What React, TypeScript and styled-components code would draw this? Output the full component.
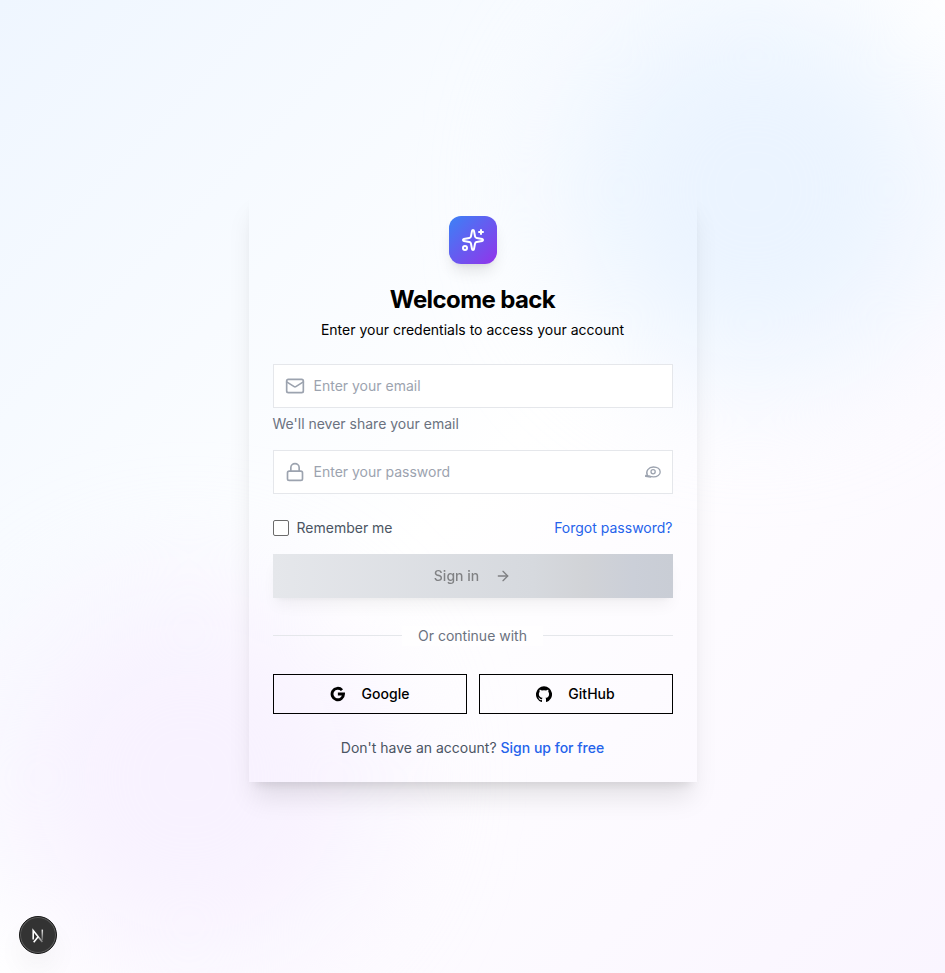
import React from "react";
import styled, { createGlobalStyle } from "styled-components";
import { Sparkles, Mail, Lock, ArrowRight } from "lucide-react";

const GlobalStyle = createGlobalStyle`
  *, *::before, *::after { box-sizing: border-box; }
  body { margin: 0; font-family: Inter, "Liberation Sans", sans-serif; font-size: 14px; line-height: 20px; color: #000; }
  h1, p { margin: 0; }
  button, input { font: inherit; letter-spacing: inherit; }
`;

const Page = styled.main`
  position: relative;
  height: 973px;
  min-height: 100vh;
  overflow: hidden;
  display: flex;
  align-items: center;
  justify-content: center;
  background: linear-gradient(to bottom right, #eff6ff, #fff 50%, #faf5ff);
`;

const Glow = styled.div<{ $x: string; $y: string; $color: string }>`
  position: absolute;
  left: ${(p) => p.$x};
  top: ${(p) => p.$y};
  width: 384px;
  height: 384px;
  border-radius: 50%;
  background: ${(p) => p.$color};
  filter: blur(64px);
`;

const Card = styled.section`
  position: relative;
  width: 448px;
  height: 590px;
  top: 0.5px;
  padding: 24px;
  display: flex;
  flex-direction: column;
  box-shadow: 0 20px 25px -5px rgba(0, 0, 0, 0.1), 0 8px 10px -6px rgba(0, 0, 0, 0.1);
`;

const Logo = styled.div`
  align-self: center;
  display: grid;
  place-items: center;
  width: 48px;
  height: 48px;
  border-radius: 12px;
  color: #fff;
  background: linear-gradient(to bottom right, #3b82f6, #9333ea);
  box-shadow: 0 10px 15px -3px rgba(0, 0, 0, 0.1), 0 4px 6px -4px rgba(0, 0, 0, 0.1);
`;

const Title = styled.h1`
  margin-top: 20px;
  text-align: center;
  font-size: 24px;
  line-height: 32px;
  font-weight: 700;
  letter-spacing: -0.6px;
`;

const Subtitle = styled.p`
  margin-top: 4px;
  text-align: center;
`;

const Field = styled.label<{ $top: number }>`
  margin-top: ${(p) => p.$top}px;
  height: 44px;
  padding: 0 10px 0 11px;
  display: flex;
  align-items: center;
  gap: 9px;
  border: 1px solid #e5e7eb;
  background: #fff;
  color: #9ca3af;
`;

const Input = styled.input`
  flex: 1;
  min-width: 0;
  padding: 0;
  border: 0;
  outline: 0;
  background: transparent;
  &::placeholder { color: #9ca3af; opacity: 1; }
`;

const Hint = styled.p`
  margin-top: 6px;
  color: #6b7280;
`;

const Options = styled.div`
  margin-top: 24px;
  display: flex;
  align-items: center;
  justify-content: space-between;
`;

const Remember = styled.label`
  display: flex;
  align-items: center;
  gap: 8px;
  color: #4b5563;
`;

const Checkbox = styled.input`
  appearance: none;
  width: 16px;
  height: 16px;
  margin: 0;
  border: 1px solid #6b6b6b;
  border-radius: 2px;
  background: #fff;
`;

const Link = styled.a<{ $strong?: boolean }>`
  color: #2563eb;
  font-weight: ${(p) => (p.$strong ? 500 : 400)};
`;

const Submit = styled.button`
  margin-top: 16px;
  height: 44px;
  flex: none;
  display: flex;
  align-items: center;
  justify-content: center;
  border: 0;
  background: linear-gradient(to right, #e5e7eb, #d6d9de 65%, #d1d3d7 78%, #cbcfd8 90%, #c9cdd5);
  box-shadow: 0 10px 15px -3px rgba(0, 0, 0, 0.05), 0 4px 6px -4px rgba(0, 0, 0, 0.05);
`;

const SubmitLabel = styled.span`
  display: flex;
  align-items: center;
  gap: 16px;
  font-weight: 500;
  color: #262626;
  opacity: 0.5;
  will-change: opacity;
`;

const Divider = styled.div`
  margin-top: 28px;
  display: flex;
  align-items: center;
  color: #6b7280;
  &::before, &::after { content: ""; flex: 1; height: 1px; margin-bottom: 1px; background: #e5e7eb; }
`;

const DividerText = styled.span`
  padding: 0 16px;
  background: rgba(255, 255, 255, 0.5);
`;

const Providers = styled.div`
  margin-top: 28px;
  display: grid;
  grid-template-columns: 1fr 1fr;
  gap: 12px;
`;

const Provider = styled.button`
  height: 40px;
  display: flex;
  align-items: center;
  justify-content: center;
  gap: 16px;
  border: 1px solid #000;
  background: transparent;
  font-weight: 500;
  color: #000;
`;

const Footer = styled.p`
  margin-top: 24px;
  text-align: center;
  color: #4b5563;
`;

const DevBadge = styled.div`
  position: absolute;
  left: 19px;
  bottom: 19px;
  width: 38px;
  height: 38px;
  display: grid;
  place-items: center;
  border-radius: 50%;
  border: 1px solid #171717;
  background: #333;
  box-shadow: inset 0 0 0 1px #5c5c5c, 0 16px 32px -8px rgba(0, 0, 0, 0.12);
`;

const EyeIcon = () => (
  <svg width="18" height="16" viewBox="0 0 18 16" fill="none" stroke="currentColor" strokeWidth="1.3" strokeLinecap="round">
    <path d="M3.4 11.4C1.2 7.2 4.8 3 9.4 3c4 0 6.8 2.1 6.8 4.9 0 2.9-3 5-6.6 5-1.6 0-3-.3-4.1-.9" />
    <path d="M1.6 12.3l5 .7M1.7 11.5l3 .5" />
    <circle cx="9.1" cy="7.8" r="2.1" />
  </svg>
);

const GoogleIcon = () => (
  <svg width="16" height="16" viewBox="0 0 24 24" fill="none" stroke="currentColor" strokeWidth="4.3">
    <path d="M18 6.2A8.6 8.6 0 1 0 20.3 12H11.8" />
  </svg>
);

const GithubIcon = () => (
  <svg width="16" height="16" viewBox="0 0 24 24" fill="currentColor">
    <path d="M12 .5a12 12 0 0 0-3.8 23.4c.6.1.8-.3.8-.6v-2.2c-3.3.7-4-1.4-4-1.4-.6-1.4-1.4-1.8-1.4-1.8-1-.7.1-.7.1-.7 1.2 0 1.9 1.2 1.9 1.2 1 1.8 2.8 1.3 3.5 1 0-.8.4-1.3.7-1.6-2.7-.3-5.5-1.3-5.5-6 0-1.2.5-2.3 1.3-3.1-.2-.4-.6-1.6 0-3.2 0 0 1-.3 3.4 1.2a11.5 11.5 0 0 1 6 0c2.3-1.5 3.3-1.2 3.3-1.2.6 1.6.2 2.8 0 3.2.9.8 1.3 1.9 1.3 3.2 0 4.6-2.8 5.6-5.5 5.9.5.4.9 1 .9 2.2v3.3c0 .3.1.7.8.6A12 12 0 0 0 12 .5Z" />
  </svg>
);

const NextMark = () => (
  <svg width="16" height="16" viewBox="0 0 16 16" fill="none">
    <defs>
      <linearGradient id="stem" x1="0" y1="1" x2="0" y2="14" gradientUnits="userSpaceOnUse">
        <stop stopColor="#fff" />
        <stop offset="1" stopColor="#fff" stopOpacity="0.15" />
      </linearGradient>
      <linearGradient id="slope" x1="7" y1="8" x2="13" y2="15" gradientUnits="userSpaceOnUse">
        <stop stopColor="#fff" />
        <stop offset="1" stopColor="#fff" stopOpacity="0.3" />
      </linearGradient>
    </defs>
    <path d="M3.2 12.4V3.6L12.4 15" stroke="url(#slope)" strokeWidth="1.6" />
    <path d="M3.7 15.3L8.4 9.4" stroke="#fff" strokeWidth="1.6" />
    <path d="M12.3 2.6v10.5" stroke="url(#stem)" strokeWidth="1.5" />
  </svg>
);

export default function App() {
  return (
    <>
      <GlobalStyle />
      <Page>
        <Glow $x="562px" $y="-2px" $color="rgba(231, 242, 255, 0.85)" />
        <Glow $x="-3px" $y="586px" $color="rgba(246, 237, 255, 0.75)" />
        <Card>
          <Logo><Sparkles size={24} /></Logo>
          <Title>Welcome back</Title>
          <Subtitle>Enter your credentials to access your account</Subtitle>
          <Field $top={24}>
            <Mail size={20} strokeWidth={2} />
            <Input type="email" placeholder="Enter your email" />
          </Field>
          <Hint>We'll never share your email</Hint>
          <Field $top={16}>
            <Lock size={20} strokeWidth={2} />
            <Input type="password" placeholder="Enter your password" />
            <EyeIcon />
          </Field>
          <Options>
            <Remember><Checkbox type="checkbox" />Remember me</Remember>
            <Link>Forgot password?</Link>
          </Options>
          <Submit type="button"><SubmitLabel>Sign in<ArrowRight size={16} /></SubmitLabel></Submit>
          <Divider><DividerText>Or continue with</DividerText></Divider>
          <Providers>
            <Provider type="button"><GoogleIcon />Google</Provider>
            <Provider type="button"><GithubIcon />GitHub</Provider>
          </Providers>
          <Footer>Don't have an account? <Link $strong>Sign up for free</Link></Footer>
        </Card>
        <DevBadge><NextMark /></DevBadge>
      </Page>
    </>
  );
}
